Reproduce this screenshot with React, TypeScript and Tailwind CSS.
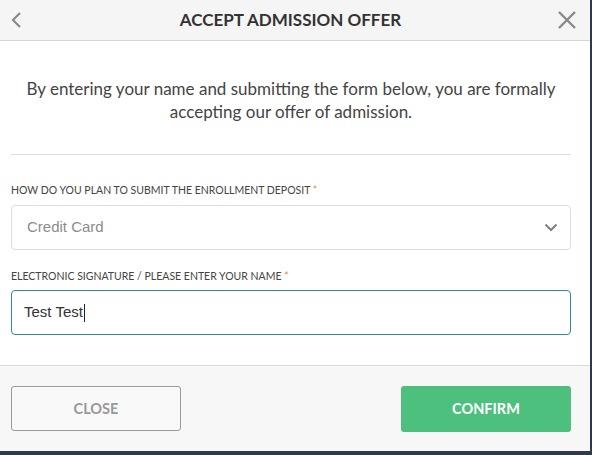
import React from "react";

export default function App() {
  return (
    <div className="w-[592px] h-[455px] bg-[#2e3a4b] overflow-hidden" style={{ fontFamily: "Lato, 'Open Sans', sans-serif" }}>
      <div className="w-[590px] h-[451px] bg-white flex flex-col">
        <div className="h-[41px] bg-[#f5f5f5] border-b border-[#d6d6d6] flex items-center justify-between px-[8px] shrink-0">
          <svg width="14" height="18" viewBox="0 0 14 18" className="ml-[2px]">
            <path d="M10 2 L3 9 L10 16" fill="none" stroke="#8a8a8a" strokeWidth="2.2" />
          </svg>
          <div className="text-[17px] font-bold text-[#333]">ACCEPT ADMISSION OFFER</div>
          <svg width="20" height="20" viewBox="0 0 20 20" className="mr-[5px]">
            <path d="M2 2 L18 18 M18 2 L2 18" fill="none" stroke="#8a8a8a" strokeWidth="2.4" />
          </svg>
        </div>
        <div className="flex-1 pl-[11px] pr-[19px]">
          <p className="text-center text-[17px] leading-[23px] text-[#444] mt-[36px]">
            By entering your name and submitting the form below, you are formally accepting our offer of admission.
          </p>
          <div className="border-t border-[#dcdcdc] mt-[31px]" />
          <div className="mt-[29px] text-[10.5px] text-[#444] uppercase leading-[12px]">
            How do you plan to submit the enrollment deposit <span className="text-[#f08a3c]">*</span>
          </div>
          <div className="mt-[9px] h-[45px] border border-[#dedede] rounded-[4px] flex items-center justify-between pl-[15px] pr-[12px]">
            <span className="text-[15px] text-[#8c8c8c]" style={{ fontFamily: "'Liberation Sans', Arial, sans-serif" }}>Credit Card</span>
            <svg width="14" height="9" viewBox="0 0 14 9">
              <path d="M1.5 1.5 L7 7 L12.5 1.5" fill="none" stroke="#808080" strokeWidth="2" />
            </svg>
          </div>
          <div className="mt-[20px] text-[10.5px] text-[#444] uppercase leading-[12px]">
            Electronic signature / please enter your name <span className="text-[#f08a3c]">*</span>
          </div>
          <div className="mt-[8px] h-[45px] border border-[#2f88a8] rounded-[4px] flex items-center pl-[12px]">
            <span className="text-[15px] text-[#333]" style={{ fontFamily: "'Liberation Sans', Arial, sans-serif" }}>Test Test</span>
            <span className="w-px h-[18px] bg-[#222] ml-[1px]" />
          </div>
        </div>
        <div className="h-[86px] bg-[#f7f7f7] border-t border-[#dcdcdc] flex items-center justify-between pl-[11px] pr-[19px] shrink-0">
          <button className="w-[170px] h-[45px] border border-[#9a9a9a] rounded-[3px] bg-[#f9f9f9] text-[#999] font-bold text-[14.5px]">CLOSE</button>
          <button className="w-[170px] h-[46px] rounded-[3px] bg-[#4cc07c] text-white font-bold text-[14.5px]">CONFIRM</button>
        </div>
      </div>
    </div>
  );
}
